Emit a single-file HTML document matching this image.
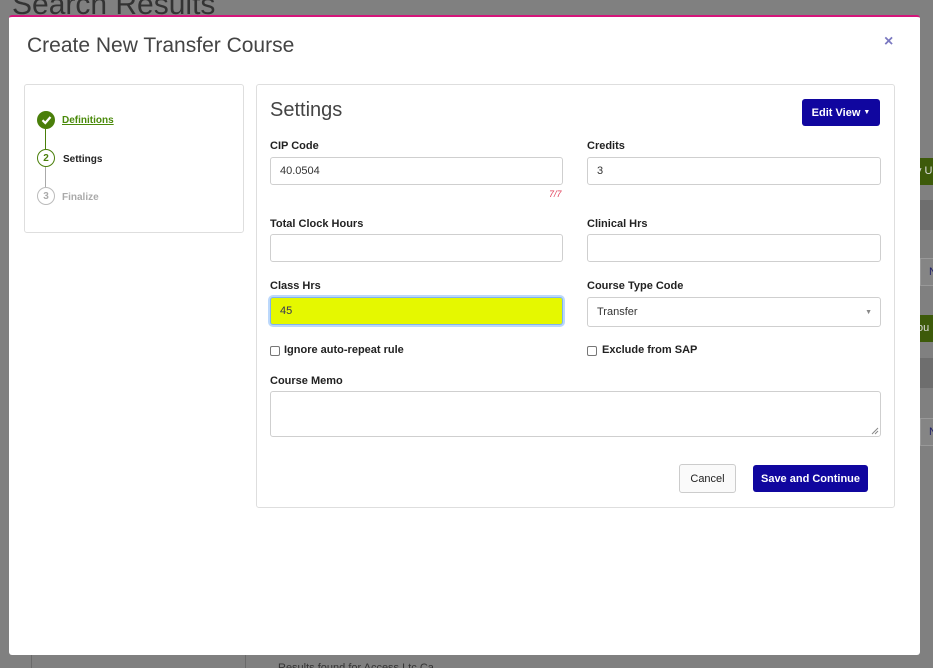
<!DOCTYPE html>
<html><head><meta charset="utf-8"><style>
*{box-sizing:border-box;margin:0;padding:0}
html,body{width:933px;height:668px;overflow:hidden}
body{background:#808080;font-family:"Liberation Sans",sans-serif;position:relative}
.abs{position:absolute}
.lbl{position:absolute;font-size:11px;font-weight:bold;color:#222}
.inp{position:absolute;border:1px solid #cfcfcf;border-radius:3px;background:#fff;font-size:11px;color:#333;padding-left:9px;display:flex;align-items:center}
.cb{position:absolute;width:10px;height:10px;border:1px solid #777;border-radius:2px;background:#fff}
.circ{position:absolute;width:18px;height:18px;border-radius:50%;font-size:10px;font-weight:bold;display:flex;align-items:center;justify-content:center}
.side{position:absolute;left:920px;width:13px;overflow:hidden;white-space:nowrap;font-size:11px}
</style></head><body>
<div class="abs" style="left:12px;top:-12px;font-size:30px;color:#333;white-space:nowrap">Search Results</div>
<div class="side" style="top:158px;height:27px;background:#3d5a0a;color:#ddd;line-height:27px;text-indent:-4px">v U</div>
<div class="side" style="top:200px;height:30px;background:#6e6e6e"></div>
<div class="side" style="top:258px;height:28px;border:1px solid #999;border-right:none;background:#858585;color:#226;line-height:26px;padding-left:8px">N</div>
<div class="side" style="top:315px;height:27px;background:#3d5a0a;color:#ddd;line-height:27px;text-indent:-3px">ou</div>
<div class="side" style="top:358px;height:30px;background:#6e6e6e"></div>
<div class="side" style="top:418px;height:28px;border:1px solid #999;border-right:none;background:#858585;color:#226;line-height:26px;padding-left:8px">N</div>
<div class="abs" style="left:31px;top:655px;width:1px;height:13px;background:#6a6a6a"></div>
<div class="abs" style="left:245px;top:655px;width:1px;height:13px;background:#6a6a6a"></div>
<div class="abs" style="left:278px;top:662px;font-size:11px;color:#333;white-space:nowrap">Results found for Access Ltc Ca</div>

<div class="abs" style="left:9px;top:15px;width:911px;height:640px;background:#fff;border-top:2px solid #d4157a;border-radius:3px"></div>
<div class="abs" style="left:27px;top:34px;font-size:21px;color:#444;white-space:nowrap">Create New Transfer Course</div>
<div class="abs" style="left:884px;top:33px;font-size:16px;color:#7a78c0;font-weight:bold">×</div>

<div class="abs" style="left:24px;top:84px;width:220px;height:149px;border:1px solid #dedede;border-radius:3px"></div>
<div class="abs" style="left:45px;top:129px;width:1px;height:20px;background:#4a7f0a"></div>
<div class="abs" style="left:45px;top:167px;width:1px;height:20px;background:#aaa"></div>
<div class="circ" style="left:37px;top:111px;background:#4a7f0a;color:#fff"><svg width="11" height="10" viewBox="0 0 11 10"><path d="M1.5 5.2 L4.3 8 L9.5 2" stroke="#fff" stroke-width="2.2" fill="none"/></svg></div>
<div class="abs" style="left:62px;top:115px;font-size:10px;font-weight:bold;color:#4a8a0a;text-decoration:underline">Definitions</div>
<div class="circ" style="left:37px;top:149px;border:1.5px solid #4a7f0a;color:#4a7f0a;background:#fff">2</div>
<div class="abs" style="left:63px;top:154px;font-size:10px;font-weight:bold;color:#222">Settings</div>
<div class="circ" style="left:37px;top:187px;border:1.5px solid #bbb;color:#aaa;background:#fff">3</div>
<div class="abs" style="left:62px;top:192px;font-size:10px;font-weight:bold;color:#aaa">Finalize</div>

<div class="abs" style="left:256px;top:84px;width:639px;height:424px;border:1px solid #dedede;border-radius:3px"></div>
<div class="abs" style="left:270px;top:99px;font-size:20px;color:#444">Settings</div>
<div class="abs" style="left:802px;top:99px;width:78px;height:27px;background:#10069f;border-radius:3px;color:#fff;font-size:11px;font-weight:bold;display:flex;align-items:center;justify-content:center">Edit View<span style="font-size:7px;margin-left:3px">▼</span></div>

<div class="lbl" style="left:270px;top:140px">CIP Code</div>
<div class="inp" style="left:270px;top:157px;width:293px;height:28px">40.0504</div>
<div class="abs" style="left:549px;top:189px;font-size:9px;color:#e0405a;font-style:italic">7/7</div>
<div class="lbl" style="left:587px;top:140px">Credits</div>
<div class="inp" style="left:587px;top:157px;width:294px;height:28px">3</div>

<div class="lbl" style="left:270px;top:218px">Total Clock Hours</div>
<div class="inp" style="left:270px;top:234px;width:293px;height:28px"></div>
<div class="lbl" style="left:587px;top:218px">Clinical Hrs</div>
<div class="inp" style="left:587px;top:234px;width:294px;height:28px"></div>

<div class="lbl" style="left:270px;top:280px">Class Hrs</div>
<div class="inp" style="left:270px;top:297px;width:293px;height:28px;background:#e5f800;border:1px solid #7fb2f0;box-shadow:0 0 0 2px #bcd8fb;color:#335">45</div>
<div class="lbl" style="left:587px;top:280px">Course Type Code</div>
<div class="inp" style="left:587px;top:297px;width:294px;height:30px">Transfer<span style="position:absolute;right:8px;font-size:7px;color:#888">▼</span></div>

<div class="cb" style="left:270px;top:346px"></div>
<div class="lbl" style="left:284px;top:344px">Ignore auto-repeat rule</div>
<div class="cb" style="left:587px;top:346px"></div>
<div class="lbl" style="left:602px;top:344px">Exclude from SAP</div>

<div class="lbl" style="left:270px;top:375px">Course Memo</div>
<div class="inp" style="left:270px;top:391px;width:611px;height:46px"></div>
<svg class="abs" style="left:871px;top:427px" width="8" height="8"><path d="M1 7L7 1M4 7L7 4" stroke="#888" stroke-width="1"/></svg>

<div class="abs" style="left:679px;top:464px;width:57px;height:29px;border:1px solid #ccc;border-radius:3px;background:#fafafa;font-size:11px;color:#222;display:flex;align-items:center;justify-content:center">Cancel</div>
<div class="abs" style="left:753px;top:465px;width:115px;height:27px;background:#10069f;border-radius:3px;font-size:11px;color:#fff;font-weight:bold;display:flex;align-items:center;justify-content:center">Save and Continue</div>
</body></html>
